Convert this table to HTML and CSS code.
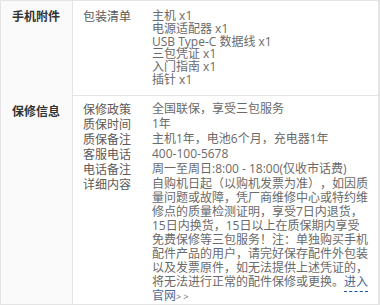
FILE: index.html
```html
<!DOCTYPE html>
<html lang="zh-CN">
<head>
<meta charset="utf-8">
<title>规格参数</title>
<link rel="stylesheet" href="styles.css">
</head>
<body>
<div class="spec">
  <section class="group group-pack">
    <div class="group-title">手机附件</div>
    <div class="group-body">
      <div class="item">
        <div class="label">包装清单</div>
        <div class="value pack-list">主机 x1<br>电源适配器 x1<br>USB Type-C 数据线 x1<br>三包凭证 x1<br>入门指南 x1<br>插针 x1</div>
      </div>
    </div>
  </section>
  <section class="group group-warranty">
    <div class="group-title">保修信息</div>
    <div class="group-body">
      <div class="item">
        <div class="label">保修政策</div>
        <div class="value">全国联保，享受三包服务</div>
      </div>
      <div class="item">
        <div class="label">质保时间</div>
        <div class="value">1年</div>
      </div>
      <div class="item">
        <div class="label">质保备注</div>
        <div class="value">主机1年，电池6个月，充电器1年</div>
      </div>
      <div class="item">
        <div class="label">客服电话</div>
        <div class="value">400-100-5678</div>
      </div>
      <div class="item">
        <div class="label">电话备注</div>
        <div class="value">周一至周日:8:00 - 18:00(仅收市话费)</div>
      </div>
      <div class="item">
        <div class="label">详细内容</div>
        <div class="value">自购机日起（以购机发票为准），如因质量问题或故障，凭厂商维修中心或特约维修点的质量检测证明，享受7日内退货，15日内换货，15日以上在质保期内享受免费保修等三包服务！注：单独购买手机配件产品的用户，请完好保存配件外包装以及发票原件，如无法提供上述凭证的，将无法进行正常的配件保修或更换。<a class="link" href="#">进入官网<span class="arrows">&gt;&gt;</span></a></div>
      </div>
    </div>
  </section>
</div>
</body>
</html>
```

FILE: styles.css
```css
* {
  box-sizing: border-box;
}

html, body {
  margin: 0;
  padding: 0;
  background: #ffffff;
}

body {
  font-family: "Open Sans", "Noto Sans CJK SC", sans-serif;
  font-size: 12px;
  color: #666666;
  text-spacing-trim: space-all;
}

.spec {
  width: 380px;
  height: 305px;
  border: 1px solid #e4e4e4;
  border-right-width: 2px;
  border-bottom-width: 1px;
}

.group {
  display: grid;
  grid-template-columns: 72px 1fr;
}

.group + .group {
  border-top: 1px solid #e4e4e4;
}

.group-title {
  background: #fafafa;
  border-right: 1px solid #e4e4e4;
  padding-left: 11px;
  font-weight: bold;
  color: #333333;
  font-family: "Noto Sans CJK SC", sans-serif;
}

.group-body {
  display: flex;
  flex-direction: column;
  gap: 1px;
  padding-left: 10px;
  padding-right: 6px;
}

.item {
  display: grid;
  grid-template-columns: 69px 218px;
}

.label {
  color: #5a5a5a;
  font-family: "Noto Sans CJK SC", sans-serif;
}

.value {
  color: #6a6a6a;
  line-break: normal;
}

/* row 1: packing list */
.group-pack .group-title,
.group-pack .group-body {
  padding-top: 9px;
  padding-bottom: 9px;
  line-height: 12.8px;
}

.group-pack {
  height: 94px;
}

/* row 2: warranty */
.group-warranty .group-title,
.group-warranty .group-body {
  padding-top: 6px;
  line-height: 14px;
}

.group-warranty .group-title {
  padding-top: 8px;
}

.link {
  color: #4a6a98;
  text-decoration: none;
  border-bottom: 1px dashed #1a56a8;
  padding-bottom: 1px;
}

.arrows {
  font-size: 9px;
  letter-spacing: 2px;
  color: #6a6a6a;
}
```
